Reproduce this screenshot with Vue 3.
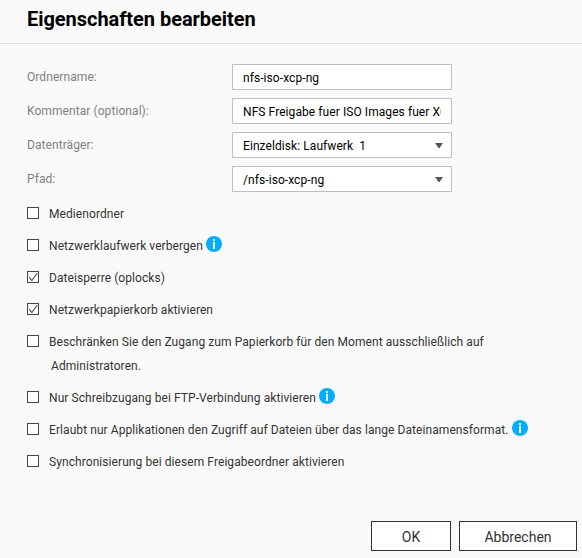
<script setup>
import { ref } from 'vue'

const name = ref('nfs-iso-xcp-ng')
const comment = ref('NFS Freigabe fuer ISO Images fuer XCP-NG')

const options = ref([
  { lines: ['Medienordner'] },
  { lines: ['Netzwerklaufwerk verbergen'], info: true },
  { lines: ['Dateisperre (oplocks)'], checked: true },
  { lines: ['Netzwerkpapierkorb aktivieren'], checked: true },
  { lines: ['Beschränken Sie den Zugang zum Papierkorb für den Moment ausschließlich auf', 'Administratoren.'] },
  { lines: ['Nur Schreibzugang bei FTP-Verbindung aktivieren'], info: true },
  { lines: ['Erlaubt nur Applikationen den Zugriff auf Dateien über das lange Dateinamensformat.'], info: true },
  { lines: ['Synchronisierung bei diesem Freigabeordner aktivieren'] },
])
</script>

<template>
  <div class="dialog">
    <header class="header"><h1>Eigenschaften bearbeiten</h1></header>

    <div class="fields">
      <div class="field">
        <label>Ordnername:</label>
        <input v-model="name" class="box" type="text" />
      </div>
      <div class="field">
        <label>Kommentar (optional):</label>
        <input v-model="comment" class="box" type="text" />
      </div>
      <div class="field">
        <label>Datenträger:</label>
        <div class="box select">
          <span>Einzeldisk: Laufwerk&nbsp; 1</span>
          <svg class="arrow" width="8" height="5" viewBox="0 0 8 5"><path d="M0 0h8L4.5 5h-1z" fill="#555" /></svg>
        </div>
      </div>
      <div class="field">
        <label>Pfad:</label>
        <div class="box select">
          <span>/nfs-iso-xcp-ng</span>
          <svg class="arrow" width="8" height="5" viewBox="0 0 8 5"><path d="M0 0h8L4.5 5h-1z" fill="#555" /></svg>
        </div>
      </div>
    </div>

    <div class="options">
      <div v-for="(o, i) in options" :key="i" class="option">
        <span class="check" @click="o.checked = !o.checked">
          <svg v-if="o.checked" width="10" height="10" viewBox="0 0 10 10">
            <path d="M1 5L3.8 8.5L9.3 1" fill="none" stroke="#555" stroke-width="1.2" />
          </svg>
        </span>
        <div class="text">
          <div v-for="(line, n) in o.lines" :key="n" class="line">{{ line }}</div>
        </div>
        <svg v-if="o.info" class="info" width="16" height="16" viewBox="0 0 16 16">
          <circle cx="8" cy="8" r="8" fill="#00aeff" />
          <path d="M7 3h2v2H7zM7 6h2v7H7z" fill="#fff" />
        </svg>
      </div>
    </div>

    <footer class="actions">
      <button class="btn ok" type="button">OK</button>
      <button class="btn cancel" type="button">Abbrechen</button>
    </footer>
  </div>
</template>

<style>
body {
  background: #fafafa;
}
</style>

<style scoped>
.dialog {
  box-sizing: border-box;
  width: 582px;
  height: 558px;
  display: flex;
  flex-direction: column;
  overflow: hidden;
  background: #fafafa;
  font-family: Roboto, "Liberation Sans", sans-serif;
  font-size: 12px;
  letter-spacing: 0.075px;
  color: #333;
}
.header {
  box-sizing: border-box;
  height: 44px;
  padding: 7px 27px 0;
  border-bottom: 1px solid #ddd;
}
h1 {
  margin: 0;
  font-size: 20px;
  line-height: 24px;
  font-weight: 700;
  letter-spacing: -0.04px;
  color: #000;
}
.fields {
  display: flex;
  flex-direction: column;
  gap: 8px;
  padding: 20px 0 0 27px;
}
.field {
  display: flex;
  height: 26px;
}
label {
  width: 205px;
  line-height: 26px;
  color: #808080;
}
.box {
  box-sizing: border-box;
  width: 220px;
  height: 26px;
  margin: 0;
  padding: 2px 10px 0;
  border: 1px solid #bfbfbf;
  border-radius: 0;
  outline: none;
  background: #fff;
  font: inherit;
  letter-spacing: inherit;
  color: #000;
}
.select {
  display: flex;
  align-items: center;
  justify-content: space-between;
  padding-right: 8px;
}
.arrow {
  margin-top: -2px;
}
.options {
  display: flex;
  flex-direction: column;
  gap: 8px;
  padding: 9px 0 0 27px;
}
.option {
  display: flex;
  align-items: flex-start;
}
.check {
  box-sizing: border-box;
  display: flex;
  width: 12px;
  height: 12px;
  margin: 6px 10px 0 0;
  border: 1px solid #444;
  background: #fff;
}
.text {
  padding-top: 1px;
  margin-bottom: -1px;
}
.line {
  line-height: 24px;
  white-space: nowrap;
}
.line + .line {
  padding-left: 2px;
}
.info {
  margin: 3px 0 0 3px;
}
.actions {
  display: flex;
  justify-content: flex-end;
  gap: 8px;
  margin-top: auto;
  padding: 0 5px 7px 0;
}
.btn {
  box-sizing: border-box;
  height: 30px;
  margin: 0;
  padding: 2px 0 0;
  border: 1px solid #333;
  border-radius: 0;
  background: #fff;
  font: inherit;
  font-size: 14px;
  color: #333;
}
.ok {
  width: 80px;
}
.cancel {
  width: 118px;
}
</style>
